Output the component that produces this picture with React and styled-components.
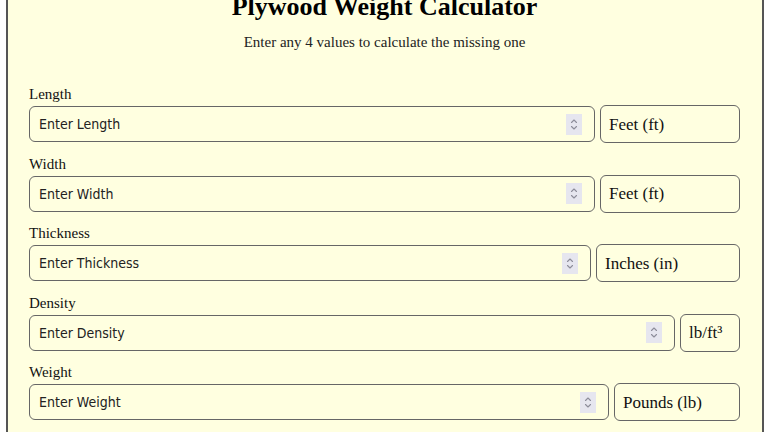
import React from "react";
import styled, { createGlobalStyle } from "styled-components";

const Global = createGlobalStyle`
  html, body { margin: 0; padding: 0; background: #ffffff; overflow: hidden; }
  body { font-family: "Liberation Serif", "Times New Roman", serif; color: #111; }
  * { box-sizing: border-box; }
`;

const Page = styled.div`
  padding: 0 4px 0 6px;
  width: 768px;
  height: 432px;
  overflow: hidden;
`;

const Card = styled.div`
  margin-top: -32px;
  background: #ffffe0;
  border: 2px solid #555;
  padding: 22px 22px 40px 21px;
`;

const Title = styled.h1`
  margin: 0;
  text-align: center;
  font-size: 26px;
  line-height: 30px;
  font-weight: bold;
  color: #000;
`;

const Subtitle = styled.p`
  margin: 11px 0 35px;
  text-align: center;
  font-size: 15px;
  line-height: 18px;
  color: #222;
`;

const Fields = styled.div`
  display: flex;
  flex-direction: column;
  gap: 12.5px;
`;

const Field = styled.div`
  display: flex;
  flex-direction: column;
`;

const Label = styled.label`
  font-size: 15px;
  line-height: 17px;
  margin-bottom: 2px;
  color: #111;
`;

const Row = styled.div`
  display: flex;
  align-items: center;
  gap: 5px;
  height: 38px;
`;

const InputBox = styled.div`
  flex: 1;
  display: flex;
  align-items: center;
  height: 36px;
  border: 1.5px solid #666;
  border-radius: 6px;
  padding: 0 12px 0 9px;
`;

const Input = styled.input`
  flex: 1;
  min-width: 0;
  border: none;
  outline: none;
  background: transparent;
  font-family: "DejaVu Sans Condensed", "DejaVu Sans", Tahoma, sans-serif;
  font-stretch: condensed;
  font-size: 14px;
  color: #222;
  padding: 0;
  &::placeholder { color: #222; opacity: 1; }
`;

const Spinner = styled.span`
  width: 16px;
  height: 21px;
  background: #e6e6ef;
  display: flex;
  align-items: center;
  justify-content: center;
`;

const Unit = styled.select`
  appearance: none;
  -webkit-appearance: none;
  width: ${(p) => p.$w}px;
  height: 38px;
  border: 1.5px solid #666;
  border-radius: 6px;
  background: transparent;
  font-family: "Liberation Serif", "Times New Roman", serif;
  font-size: 17px;
  color: #111;
  padding: 0 0 0 8px;
  outline: none;
`;

const SpinIcon = () => (
  <svg width="10" height="17" viewBox="0 0 10 17" fill="none" stroke="#8d8d9a" strokeWidth="1.1" strokeLinecap="round" strokeLinejoin="round">
    <path d="M2.5 6.5 L5 4 L7.5 6.5" />
    <path d="M2.5 10.5 L5 13 L7.5 10.5" />
  </svg>
);

const fields = [
  { label: "Length", ph: "Enter Length", unit: "Feet (ft)", w: 140 },
  { label: "Width", ph: "Enter Width", unit: "Feet (ft)", w: 140 },
  { label: "Thickness", ph: "Enter Thickness", unit: "Inches (in)", w: 144 },
  { label: "Density", ph: "Enter Density", unit: "lb/ft³", w: 60 },
  { label: "Weight", ph: "Enter Weight", unit: "Pounds (lb)", w: 126 },
];

export default function App() {
  return (
    <>
      <Global />
      <Page>
        <Card>
          <Title>Plywood Weight Calculator</Title>
          <Subtitle>Enter any 4 values to calculate the missing one</Subtitle>
          <Fields>
            {fields.map((f) => (
              <Field key={f.label}>
                <Label>{f.label}</Label>
                <Row>
                  <InputBox>
                    <Input type="text" placeholder={f.ph} />
                    <Spinner><SpinIcon /></Spinner>
                  </InputBox>
                  <Unit $w={f.w} defaultValue={f.unit}>
                    <option>{f.unit}</option>
                  </Unit>
                </Row>
              </Field>
            ))}
          </Fields>
        </Card>
      </Page>
    </>
  );
}
